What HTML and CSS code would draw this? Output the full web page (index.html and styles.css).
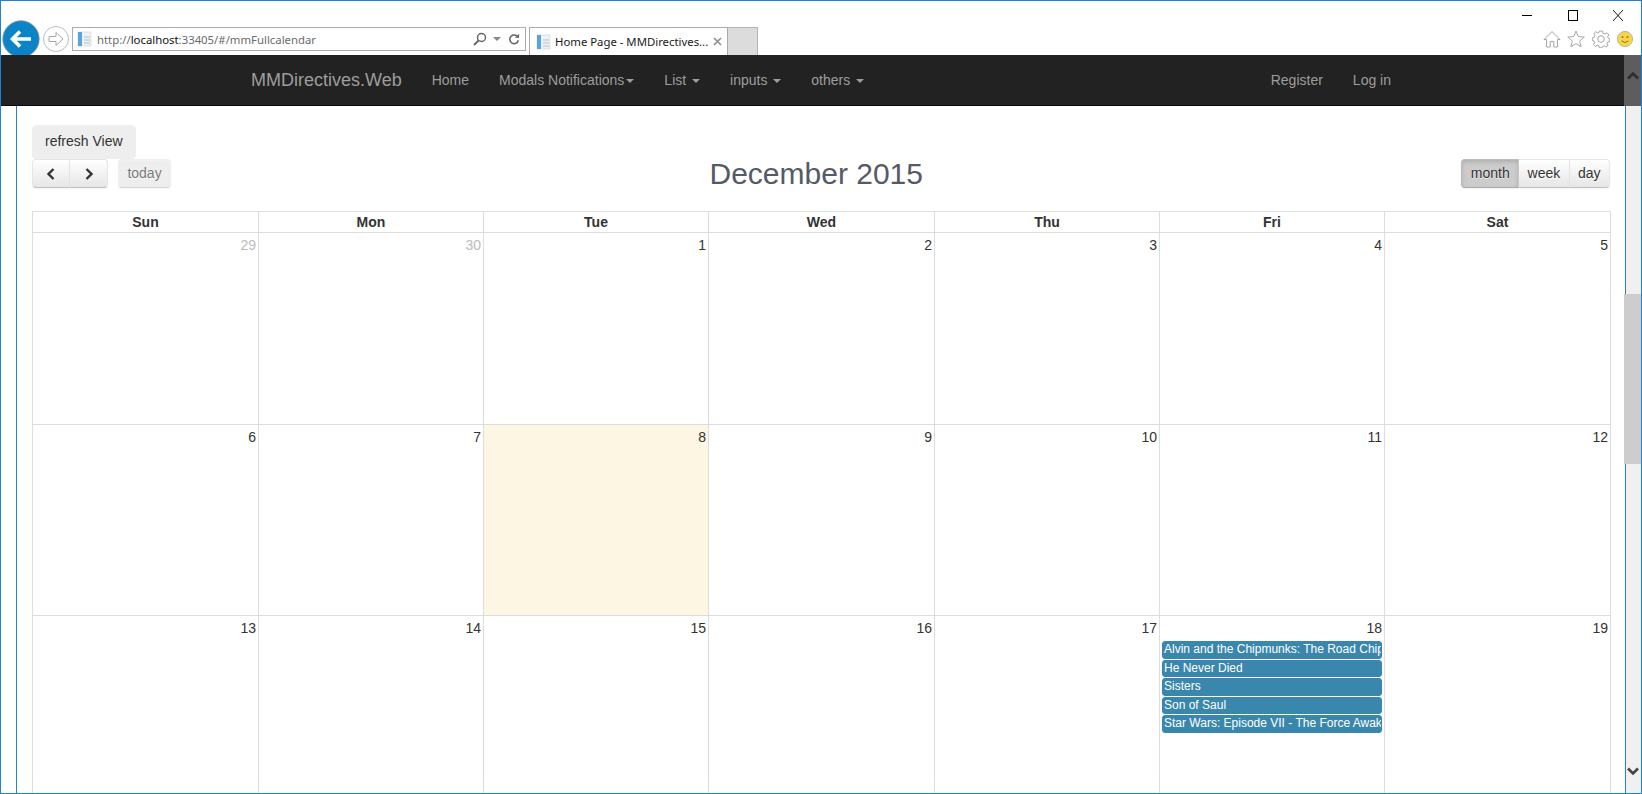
FILE: index.html
```html
<!DOCTYPE html>
<html lang="en">
<head>
<meta charset="utf-8">
<title>Home Page - MMDirectives.Web</title>
<link rel="stylesheet" href="styles.css">
</head>
<body>
<div class="window">
  <header class="chrome">
    <div class="caption">
      <svg class="ctl" viewBox="0 0 10 11"><path d="M0 5.5H10" stroke="#000" fill="none"/></svg>
      <svg class="ctl" viewBox="0 0 10 11"><rect x=".5" y=".5" width="9" height="10" stroke="#000" fill="none"/></svg>
      <svg class="ctl" viewBox="0 0 10 11"><path d="M0 0L10 11M10 0L0 11" stroke="#000" stroke-width=".9" fill="none"/></svg>
    </div>
    <div class="toolbar">
      <svg class="back" viewBox="0 0 38 38"><circle cx="19" cy="19" r="18.2" fill="#0a84c6" stroke="#8a8f94" stroke-width=".8"/><path d="M29 19H11M18 11.5L10.5 19L18 26.5" stroke="#fff" stroke-width="3.6" fill="none"/></svg>
      <svg class="forward" viewBox="0 0 26 26"><circle cx="13" cy="13" r="12.5" fill="#fff" stroke="#bdbdbd"/><path d="M6 10.5H13V6.5L20 13L13 19.5V15.5H6Z" fill="none" stroke="#a8a8a8"/></svg>
      <div class="address">
        <svg class="page-ico" viewBox="0 0 16 16"><rect x="1" y="1" width="13" height="14" fill="#eef2f6" stroke="#c9d2da" stroke-width=".6"/><rect x="1" y="1" width="4" height="14" fill="#5ba3dc"/><path d="M7 6H13M7 9H13M7 12H13" stroke="#b5bfc8"/></svg>
        <span class="url">http://<b>localhost</b>:33405/#/mmFullcalendar</span>
        <svg class="addr-ico" viewBox="0 0 14 14"><circle cx="8.5" cy="5.5" r="4" fill="none" stroke="#666" stroke-width="1.5"/><path d="M5.5 8.5L1 13" stroke="#666" stroke-width="2"/></svg>
        <span class="addr-caret"></span>
        <svg class="addr-ico refresh-ico" viewBox="0 0 14 14"><path d="M11.5 5A5 5 0 1 0 12 8.5" fill="none" stroke="#666" stroke-width="1.8"/><path d="M8 5.5H13V1Z" fill="#666"/></svg>
      </div>
      <div class="tab">
        <svg class="page-ico" viewBox="0 0 16 16"><rect x="1" y="1" width="13" height="14" fill="#eef2f6" stroke="#c9d2da" stroke-width=".6"/><rect x="1" y="1" width="4" height="14" fill="#5ba3dc"/><path d="M7 6H13M7 9H13M7 12H13" stroke="#b5bfc8"/></svg>
        <span class="tab-title">Home Page - MMDirectives...</span>
        <svg class="tab-x" viewBox="0 0 9 9"><path d="M1 1L8 8M8 1L1 8" stroke="#8f8f8f" stroke-width="1.7"/></svg>
      </div>
      <div class="new-tab"></div>
      <div class="tools">
        <svg class="tool" viewBox="0 0 18 18"><path d="M1 9.5L9 1.5L17 9.5H14.5V17H10.8V11.5H7.2V17H3.5V9.5Z" fill="#fff" stroke="#a6a6a6"/></svg>
        <svg class="tool" viewBox="0 0 18 18"><path d="M9 1L11.3 6.6L17.3 7L12.7 10.9L14.1 16.8L9 13.6L3.9 16.8L5.3 10.9L.7 7L6.7 6.6Z" fill="#fff" stroke="#a6a6a6"/></svg>
        <svg class="tool" viewBox="0 0 18 18"><path d="M7.5 1H10.5L11 3.2L13 4L15 2.8L17 5L15.6 6.8L16.2 8.3L17.8 9V11.5L15.8 12L15 13.8L16 15.5L14 17L12.2 15.7L10.5 16.4L10 17.8H7.5L7 15.9L5.3 15.2L3.5 16.4L1.5 14.5L2.7 12.7L2 11L.3 10.5V7.8L2.2 7.2L2.9 5.4L1.8 3.6L3.8 1.7L5.6 2.9L7.1 2.2Z" fill="#fff" stroke="#a6a6a6"/><circle cx="9" cy="9" r="3.3" fill="#fff" stroke="#a6a6a6"/></svg>
        <svg class="tool" viewBox="0 0 18 18"><circle cx="9" cy="9" r="7.6" fill="#f6d548" stroke="#b9b9a0"/><circle cx="6.5" cy="7" r="1" fill="#8a7a20"/><circle cx="11.5" cy="7" r="1" fill="#8a7a20"/><path d="M5.5 11Q9 14 12.5 11" fill="none" stroke="#8a7a20"/></svg>
      </div>
    </div>
  </header>
  <div class="view">
    <div class="viewport">
      <nav class="navbar">
        <a class="brand">MMDirectives.Web</a>
        <a class="nav-link">Home</a>
        <a class="nav-link">Modals Notifications<span class="caret"></span></a>
        <a class="nav-link">List <span class="caret"></span></a>
        <a class="nav-link">inputs <span class="caret"></span></a>
        <a class="nav-link">others <span class="caret"></span></a>
        <span class="nav-spacer"></span>
        <a class="nav-link">Register</a>
        <a class="nav-link">Log in</a>
      </nav>
      <main class="page">
        <button class="refresh">refresh View</button>
        <div class="cal-toolbar">
          <div class="cal-left">
            <div class="btn-group">
              <button class="fc-btn nav-btn first"><svg class="chev" viewBox="0 0 10 14"><path d="M7.5 2L2.5 7L7.5 12" fill="none" stroke="#333" stroke-width="2.4"/></svg></button>
              <button class="fc-btn nav-btn last"><svg class="chev" viewBox="0 0 10 14"><path d="M2.5 2L7.5 7L2.5 12" fill="none" stroke="#333" stroke-width="2.4"/></svg></button>
            </div>
            <button class="fc-btn today">today</button>
          </div>
          <h2 class="cal-title">December 2015</h2>
          <div class="btn-group">
            <button class="fc-btn first active">month</button>
            <button class="fc-btn">week</button>
            <button class="fc-btn last">day</button>
          </div>
        </div>
        <div class="calendar">
          <div class="head">Sun</div><div class="head">Mon</div><div class="head">Tue</div><div class="head">Wed</div><div class="head">Thu</div><div class="head">Fri</div><div class="head">Sat</div>
          <div class="day muted">29</div><div class="day muted">30</div><div class="day">1</div><div class="day">2</div><div class="day">3</div><div class="day">4</div><div class="day">5</div>
          <div class="day">6</div><div class="day">7</div><div class="day current">8</div><div class="day">9</div><div class="day">10</div><div class="day">11</div><div class="day">12</div>
          <div class="day">13</div><div class="day">14</div><div class="day">15</div><div class="day">16</div><div class="day">17</div>
          <div class="day">18
            <div class="event">Alvin and the Chipmunks: The Road Chip</div>
            <div class="event">He Never Died</div>
            <div class="event">Sisters</div>
            <div class="event">Son of Saul</div>
            <div class="event">Star Wars: Episode VII - The Force Awakens</div>
          </div>
          <div class="day">19</div>
        </div>
      </main>
    </div>
    <div class="scrollbar">
      <div class="sb-up"><svg class="sb-arrow" viewBox="0 0 12 9"><path d="M1 7.5L6 2.5L11 7.5" fill="none" stroke="#2e2e2e" stroke-width="2.6"/></svg></div>
      <div class="sb-track">
        <div class="sb-thumb"></div>
        <svg class="sb-arrow down" viewBox="0 0 12 9"><path d="M1 1.5L6 6.5L11 1.5" fill="none" stroke="#444" stroke-width="2.6"/></svg>
      </div>
    </div>
  </div>
</div>
</body>
</html>
```
FILE: styles.css
```css
* { box-sizing: border-box; }
html, body { margin: 0; height: 100%; overflow: hidden; background: #fff; }
body { font-family: "Liberation Sans", Arial, sans-serif; font-size: 14px; color: #333; }

.window { width: 1642px; height: 794px; border: 1px solid #1883d7; display: flex; flex-direction: column; overflow: hidden; }

.chrome { height: 54px; flex: none; overflow: hidden; background: #fff; font-family: "Noto Sans", sans-serif; }
.caption { height: 19px; padding: 9px 18px 0 0; display: flex; justify-content: flex-end; gap: 35.5px; }
.ctl { width: 10px; height: 11px; display: block; }
.toolbar { height: 35px; display: flex; align-items: flex-start; }
.back { width: 38px; height: 38px; margin-left: 1px; flex: none; }
.forward { width: 26px; height: 26px; margin: 6px 0 0 3px; flex: none; }
.address { width: 454px; height: 24px; margin: 7px 0 0 3px; border: 1px solid #ababab; display: flex; align-items: center; padding: 0 5px 0 4px; flex: none; }
.page-ico { width: 16px; height: 16px; flex: none; }
.url { flex: 1; margin-left: 4px; font-size: 11.35px; color: #6b6b6b; white-space: nowrap; }
.url b { font-weight: 400; color: #111; }
.addr-ico { width: 14px; height: 14px; flex: none; }
.refresh-ico { width: 12px; height: 12px; }
.addr-caret { width: 0; height: 0; margin: 0 7px 0 6px; border: 4px solid transparent; border-top-color: #888; border-bottom: 0; }
.tab { width: 199px; height: 28px; margin: 7px 0 0 3px; border: 1px solid #ababab; border-bottom: 0; display: flex; align-items: center; padding: 0 5px 0 6px; flex: none; }
.tab-title { flex: 1; margin-left: 3px; font-size: 11.35px; color: #1a1a1a; white-space: nowrap; }
.tab-x { width: 9px; height: 9px; flex: none; }
.new-tab { width: 30px; height: 28px; margin-top: 7px; background: #dcdcdc; border: 1px solid #b4b4b4; border-left: 0; border-bottom: 0; flex: none; }
.tools { margin-left: auto; padding: 10px 7px 0 0; display: flex; gap: 6.5px; }
.tool { width: 18px; height: 18px; display: block; }

.view { flex: 1; min-height: 0; display: flex; }
.viewport { width: 1623px; flex: none; display: flex; flex-direction: column; overflow: hidden; }

.navbar { height: 51px; flex: none; background: #222; border-bottom: 1px solid #080808; display: flex; align-items: stretch; padding: 0 218px 0 235px; color: #9d9d9d; }
.brand { font-size: 18px; line-height: 50px; padding: 0 15px; }
.nav-link { line-height: 50px; padding: 0 15px; white-space: nowrap; }
.nav-spacer { flex: 1; }
.caret { display: inline-block; width: 0; height: 0; margin-left: 2px; vertical-align: middle; border-top: 4px solid #9d9d9d; border-left: 4px solid transparent; border-right: 4px solid transparent; }

.page { flex: 1; min-height: 0; margin-left: 15px; padding: 19px 14px 0 15px; border-left: 1px solid #2a80c8; overflow: hidden; }
.refresh { display: block; height: 34px; padding: 0 12px 2px; background: #eee; border: 1px solid #eee; border-radius: 4px; font: 14px "Liberation Sans", Arial, sans-serif; color: #333; }

.cal-toolbar { display: flex; align-items: flex-start; margin-bottom: 23px; }
.cal-left { display: flex; gap: 10px; }
.cal-title { flex: 1; margin: 0; text-align: center; font-size: 30px; font-weight: 400; line-height: 29px; color: #555b66; }
.btn-group { display: flex; }
.fc-btn { height: 29px; padding: 0 8.4px 1px; font: 14px "Liberation Sans", Arial, sans-serif; color: #333; border: 1px solid #e6e6e6; border-bottom-color: #bfbfbf; border-left-width: 0; background: linear-gradient(#fff, #e6e6e6); box-shadow: inset 0 1px 0 rgba(255,255,255,.2), 0 1px 2px rgba(0,0,0,.05); display: flex; align-items: center; text-shadow: 0 1px 1px rgba(255,255,255,.75); }
.fc-btn.first { border-left-width: 1px; border-radius: 4px 0 0 4px; }
.fc-btn.last { border-radius: 0 4px 4px 0; }
.nav-btn { width: 38px; justify-content: center; padding: 0; }
.chev { width: 10px; height: 14px; }
.fc-btn.today { border-left-width: 1px; border-radius: 4px; opacity: .65; background: #e6e6e6; }
.fc-btn.active { background: #ccc; border-color: #bbb #ccc #aaa #bbb; box-shadow: inset 0 2px 4px rgba(0,0,0,.15), 0 1px 2px rgba(0,0,0,.05); }

.calendar { display: grid; grid-template-columns: 226px 225px 225px 226px 225px 225px 226px; grid-template-rows: 21px 192px 191px 191px; width: 1579px; border-top: 1px solid #ddd; border-left: 1px solid #ddd; }
.head { border-right: 1px solid #ddd; border-bottom: 1px solid #ddd; text-align: center; font-weight: 700; line-height: 20px; }
.day { border-right: 1px solid #ddd; border-bottom: 1px solid #ddd; padding: 2px 2px 0 0; text-align: right; line-height: 20px; min-width: 0; }
.muted { color: #bbb; }
.current { background: #fcf6e3; }
.event { margin: 3px 0 -2px 2px; padding: 0 1px; background: #3a87ad; border: 1px solid #3a87ad; border-radius: 3px; color: #fff; font-size: 12px; line-height: 15.6px; text-align: left; white-space: nowrap; overflow: hidden; }

.scrollbar { width: 17px; flex: none; display: flex; flex-direction: column; }
.sb-up { height: 51px; flex: none; background: #5d5d5d; display: flex; justify-content: center; padding-top: 16px; }
.sb-arrow { width: 12px; height: 9px; display: block; }
.sb-track { flex: 1; margin-left: 1px; border-left: 1px solid #2a80c8; background: #f0f0f0; position: relative; }
.sb-thumb { position: absolute; left: -2px; right: 0; top: 188px; height: 170px; background: #cdcdcd; }
.sb-arrow.down { position: absolute; left: 1px; bottom: 17px; }
```
